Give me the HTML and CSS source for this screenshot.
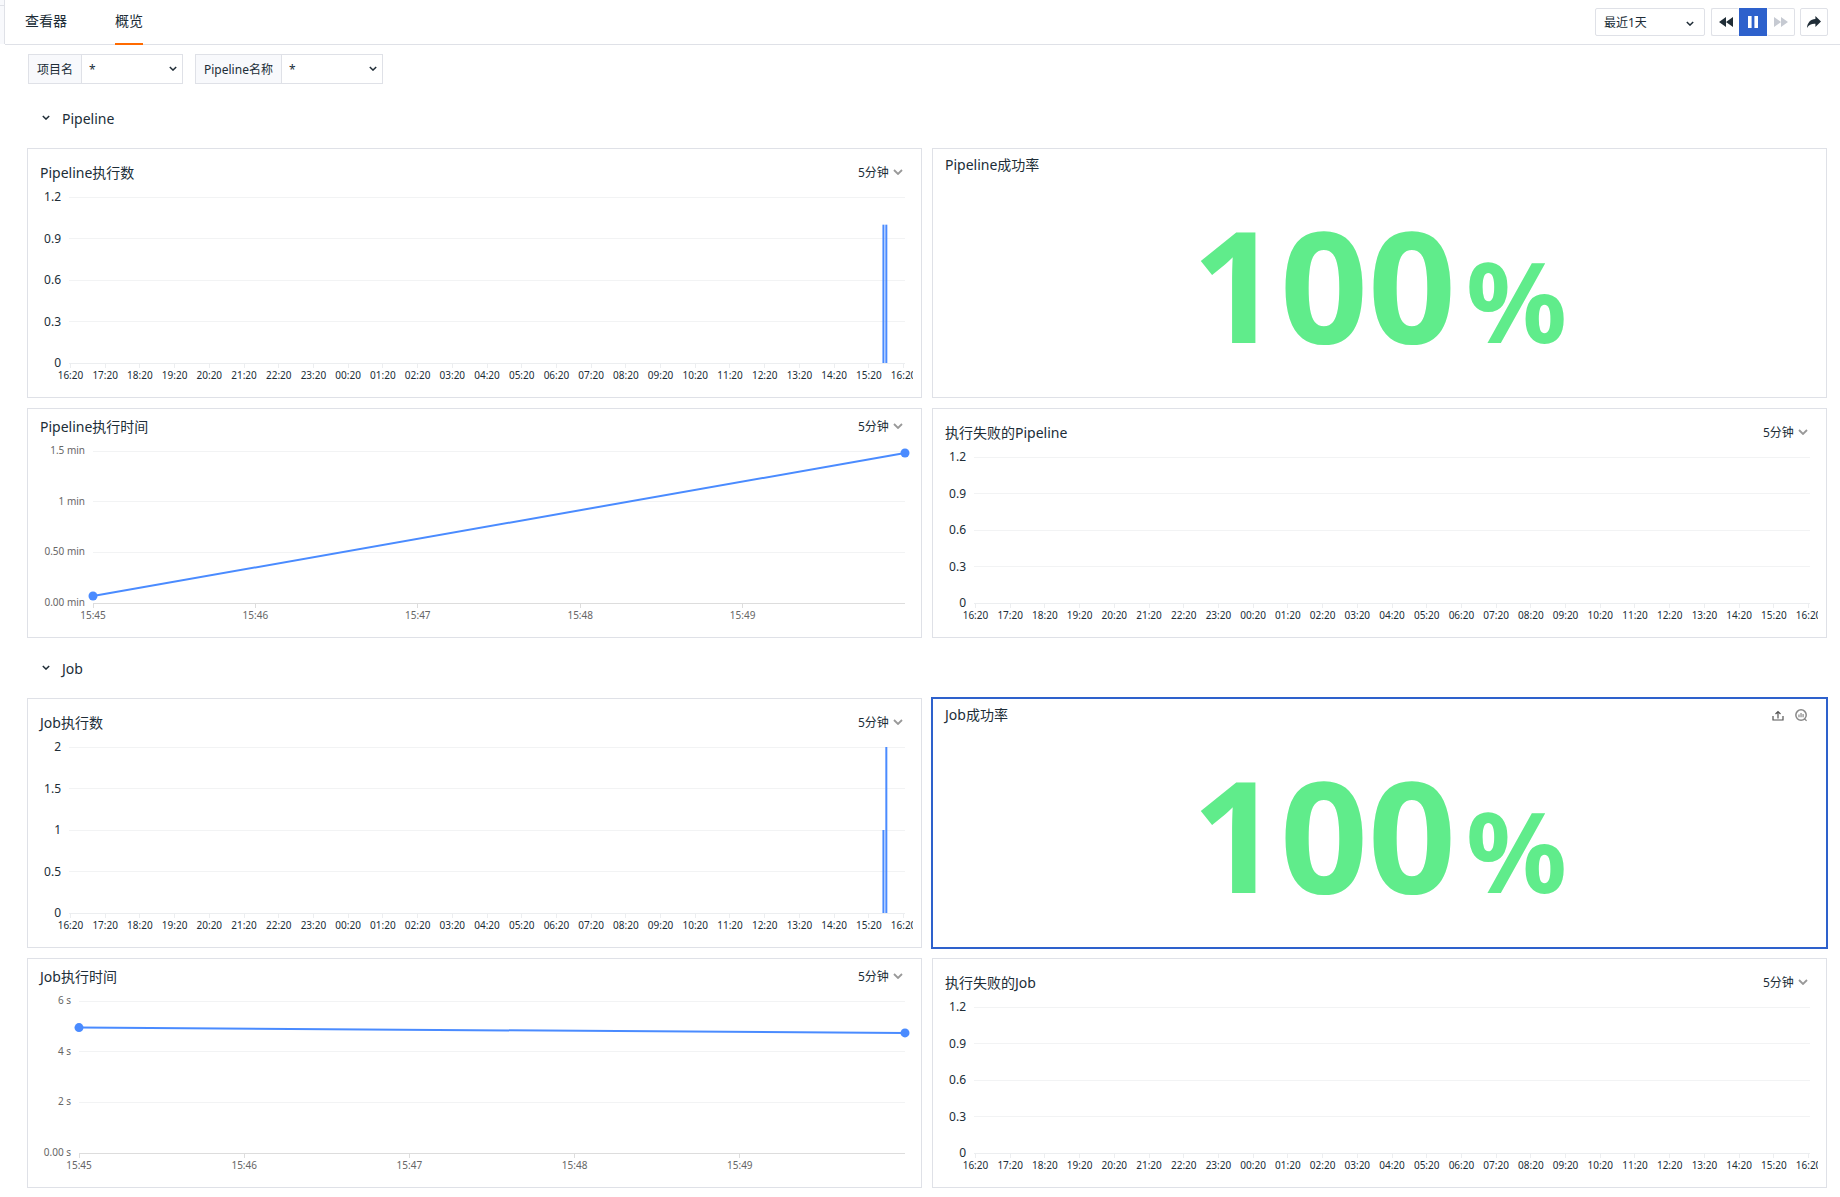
FILE: index.html
```html
<!DOCTYPE html>
<html lang="zh-CN">
<head>
<meta charset="utf-8">
<title>概览</title>
<link rel="stylesheet" href="styles.css">
</head>
<body>
<svg class="sprite" aria-hidden="true">
  <symbol id="chevron" viewBox="0 0 10 6"><path d="M1 1l4 4 4-4" fill="none" stroke="currentColor" stroke-width="1.8"/></symbol>
  <symbol id="rewind" viewBox="0 0 14 10"><path d="M7 0v10L0 5zM14 0v10L7 5z" fill="currentColor"/></symbol>
  <symbol id="forward" viewBox="0 0 14 10"><path d="M0 0v10l7-5zM7 0v10l7-5z" fill="currentColor"/></symbol>
  <symbol id="pause" viewBox="0 0 10 12"><path d="M0 0h3.6v12H0zM6.4 0H10v12H6.4z" fill="currentColor"/></symbol>
  <symbol id="share" viewBox="0 0 14 12"><path d="M8.4 0L14 5.6 8.4 11V7.800C4.600 7.600 1.800 8.800 0 12 .4 6.600 3.400 3.400 8.400 3z" fill="currentColor"/></symbol>
  <symbol id="upload" viewBox="0 0 12 12"><path d="M6 9.500V3M3.500 5L6 2.500 8.500 5M1 7v4h10V7" fill="none" stroke="currentColor" stroke-width="1.200"/></symbol>
  <symbol id="insight" viewBox="0 0 14 14"><circle cx="6.500" cy="6.500" r="5.600" fill="none" stroke="currentColor" stroke-width="1.600"/><path d="M4.300 6v3M6.500 4.300V9M8.700 5.500V9M10 10.500l2.500 2.200" fill="none" stroke="currentColor" stroke-width="1.300"/></symbol>
</svg>

<header class="topbar">
  <div class="edge"></div>
  <div class="bar">
    <nav class="tabs">
      <a class="tab" href="#viewer">查看器</a>
      <a class="tab tab-active" href="#overview" aria-current="page">概览</a>
    </nav>
    <div class="tools">
      <div class="picker range">
        <select aria-label="时间范围"><option>最近1天</option></select>
        <svg class="arrow"><use href="#chevron"/></svg>
      </div>
      <div class="playback">
        <button type="button" aria-label="后退"><svg class="skip"><use href="#rewind"/></svg></button>
        <button type="button" class="on" aria-label="暂停"><svg class="pause"><use href="#pause"/></svg></button>
        <button type="button" aria-label="前进" disabled><svg class="skip"><use href="#forward"/></svg></button>
      </div>
      <button type="button" aria-label="分享"><svg class="share"><use href="#share"/></svg></button>
    </div>
  </div>
</header>

<main>
  <form class="filters">
    <div class="filter">
      <label for="project">项目名</label>
      <div class="picker"><select id="project"><option>*</option></select><svg class="arrow"><use href="#chevron"/></svg></div>
    </div>
    <div class="filter">
      <label for="pipeline">Pipeline名称</label>
      <div class="picker"><select id="pipeline"><option>*</option></select><svg class="arrow"><use href="#chevron"/></svg></div>
    </div>
  </form>

  <section>
    <h2 class="group"><button type="button"><svg class="arrow"><use href="#chevron"/></svg>Pipeline</button></h2>
    <div class="cards">
      <article class="card">
        <div class="card-head"><h3>Pipeline执行数</h3><div class="picker step"><select aria-label="粒度"><option>5分钟</option></select><svg class="arrow"><use href="#chevron"/></svg></div></div>
        <div class="chart"><svg class="plot" data-chart="pipelineRuns"></svg></div>
      </article>
      <article class="card stat">
        <div class="card-head"><h3>Pipeline成功率</h3></div>
        <p class="value">100<span>%</span></p>
      </article>
      <article class="card line">
        <div class="card-head"><h3>Pipeline执行时间</h3><div class="picker step"><select aria-label="粒度"><option>5分钟</option></select><svg class="arrow"><use href="#chevron"/></svg></div></div>
        <div class="chart minutes"><svg class="plot" data-chart="pipelineTime"></svg></div>
      </article>
      <article class="card">
        <div class="card-head"><h3>执行失败的Pipeline</h3><div class="picker step"><select aria-label="粒度"><option>5分钟</option></select><svg class="arrow"><use href="#chevron"/></svg></div></div>
        <div class="chart"><svg class="plot" data-chart="failed"></svg></div>
      </article>
    </div>
  </section>

  <section>
    <h2 class="group"><button type="button"><svg class="arrow"><use href="#chevron"/></svg>Job</button></h2>
    <div class="cards">
      <article class="card">
        <div class="card-head"><h3>Job执行数</h3><div class="picker step"><select aria-label="粒度"><option>5分钟</option></select><svg class="arrow"><use href="#chevron"/></svg></div></div>
        <div class="chart"><svg class="plot" data-chart="jobRuns"></svg></div>
      </article>
      <article class="card stat selected">
        <div class="card-head"><h3>Job成功率</h3>
          <div class="actions">
            <button type="button" aria-label="导出"><svg class="upload"><use href="#upload"/></svg></button>
            <button type="button" aria-label="分析"><svg class="insight"><use href="#insight"/></svg></button>
          </div>
        </div>
        <p class="value">100<span>%</span></p>
      </article>
      <article class="card line">
        <div class="card-head"><h3>Job执行时间</h3><div class="picker step"><select aria-label="粒度"><option>5分钟</option></select><svg class="arrow"><use href="#chevron"/></svg></div></div>
        <div class="chart seconds"><svg class="plot" data-chart="jobTime"></svg></div>
      </article>
      <article class="card">
        <div class="card-head"><h3>执行失败的Job</h3><div class="picker step"><select aria-label="粒度"><option>5分钟</option></select><svg class="arrow"><use href="#chevron"/></svg></div></div>
        <div class="chart"><svg class="plot" data-chart="failed"></svg></div>
      </article>
    </div>
  </section>
</main>
<script src="charts.js"></script>
</body>
</html>
```
FILE: styles.css
```css
* { box-sizing: border-box; }
body {
  margin: 0;
  background: #fff;
  color: #202d37;
  font: 14px/22px "Noto Sans", "Noto Sans CJK SC", sans-serif;
}
h2, h3, p { margin: 0; font-size: 14px; font-weight: 400; }
button, select { font: inherit; color: inherit; border: 0; background: none; padding: 0; margin: 0; }
svg { display: block; }
.sprite { display: none; }

.topbar { display: flex; height: 45px; }
.edge { width: 5px; height: 44px; background: #f8f9fc; border-right: 1px solid #dfe1e7; }
.edge::before { content: ""; display: block; height: 5px; border-bottom: 1px solid #dfe1e7; }
.bar { flex: 1; display: flex; border-bottom: 1px solid #dfe1e7; }
.tabs { display: flex; gap: 48px; margin-bottom: -1px; padding-left: 20px; }
.tab { color: inherit; text-decoration: none; line-height: 41px; }
.tab-active { border-bottom: 2px solid #ff6a00; }
.tools { display: flex; gap: 5px; margin-left: auto; padding: 8px 12px 0 0; }
.tools button { display: grid; place-items: center; width: 28px; height: 28px; border: 1px solid #dfe1e7; border-radius: 2px; }
.playback { display: flex; }
.tools .on { border-color: #2e61cc; border-radius: 0; background: #2e61cc; color: #fff; }
.tools .playback button:first-child { border-right: 0; }
.tools .playback button:last-child { border-left: 0; }
.tools button:disabled { color: #c6cad2; }

.picker { display: grid; align-items: center; font-size: 12px; }
.picker select { grid-area: 1 / 1; width: 100%; height: 100%; appearance: none; }
.picker .arrow { grid-area: 1 / 1; justify-self: end; pointer-events: none; }
.arrow { width: 8px; height: 5px; }
.range { width: 110px; height: 28px; margin-right: 1px; border: 1px solid #dfe1e7; border-radius: 2px; }
.range select { padding: 2px 0 0 8px; }
.range .arrow { margin: 2px 10px 0 0; }
.skip { width: 14px; height: 10px; }
.pause { width: 10px; height: 12px; }
.share { width: 14px; height: 12px; }

main { padding: 9px 13px 9px 27px; }
.filters { display: flex; gap: 12px; padding-left: 1px; margin-bottom: 4px; }
.filter { display: flex; height: 30px; border: 1px solid #dfe1e7; font-size: 12px; }
.filter label { padding: 0 8px; background: #f8f9fc; border-right: 1px solid #dfe1e7; line-height: 30px; }
.filter .picker { width: 100px; }
.filter select { padding: 2px 0 0 7px; }
.filter .arrow { margin: 0 5px 2px 0; }

.group button { display: flex; align-items: center; gap: 12px; height: 60px; padding: 2px 0 0 15px; }
.group .arrow { margin-bottom: 3px; }
.cards { display: grid; grid-template-columns: 1fr 1fr; grid-template-rows: 250px 230px; gap: 10px; }
.card { display: flex; flex-direction: column; min-width: 0; border: 1px solid #dfe1e7; }
.card-head { display: flex; justify-content: space-between; padding: 13px 18px 0 12px; }
.line .card-head { padding-top: 7px; }
.stat .card-head { padding-top: 5px; }
.step { width: 45px; height: 22px; }
.step .arrow { width: 10px; height: 6px; margin-bottom: 2px; color: #999; }
.selected { border-color: #2e61cc; box-shadow: 0 0 0 1px #2e61cc; }
.actions { display: flex; align-items: center; gap: 11px; color: #555; }
.upload { width: 12px; height: 12px; }
.insight { width: 13px; height: 13px; color: #888; }

.value { margin: auto; padding-top: 10px; color: #60ec8b; font-size: 154px; font-weight: 700; line-height: 180px; }
.value span { margin-left: 10px; font-size: 112px; }

.chart { flex: 1; display: flex; min-height: 0; margin-right: 8px; padding: 13px 8px 34px 41px; overflow: hidden; }
.minutes { padding-left: 65px; }
.seconds { padding-left: 51px; }
.plot { flex: 1; min-width: 0; height: 100%; overflow: visible; font-size: 12px; }
.plot text { fill: #202d37; }
.plot .x { font-size: 10px; text-anchor: middle; }
.plot .y { text-anchor: end; }
.line .plot text { fill: #666; font-size: 10px; }
.plot .grid { stroke: #f2f3f4; shape-rendering: crispEdges; }
.plot .axis { stroke: #eceef0; shape-rendering: crispEdges; }
.line .plot .axis { stroke: #ddd; }
.plot .bar { fill: #4a8bff; }
.plot .series { stroke: #4a8bff; stroke-width: 2; }
.plot .dot { fill: #4a8bff; }
```
FILE: charts.js
```js
const SLOTS = 289;
const hours = Array.from({ length: 25 }, (_, i) => ({
  at: (i * 12 + 0.5) / SLOTS,
  text: String((16 + i) % 24).padStart(2, "0") + ":20",
}));
const minutes = [45, 46, 47, 48, 49].map((m, i) => ({ at: i / 5, text: "15:" + m }));

const charts = {
  pipelineRuns: { y: ["1.2", "0.9", "0.6", "0.3", "0"], x: hours, bars: [[281, 1 / 1.2], [282, 1 / 1.2]] },
  jobRuns: { y: ["2", "1.5", "1", "0.5", "0"], x: hours, bars: [[281, 0.5], [282, 1]] },
  failed: { y: ["1.2", "0.9", "0.6", "0.3", "0"], x: hours },
  pipelineTime: { y: ["1.5 min", "1 min", "0.50 min", "0.00 min"], x: minutes, ends: [0.046, 0.987] },
  jobTime: { y: ["6 s", "4 s", "2 s", "0.00 s"], x: minutes, ends: [0.825, 0.79] },
};

function add(parent, name, attrs, text) {
  const node = document.createElementNS("http://www.w3.org/2000/svg", name);
  for (const key in attrs) node.setAttribute(key, attrs[key]);
  if (text) node.textContent = text;
  parent.append(node);
  return node;
}
const pct = (v) => v * 100 + "%";

for (const svg of document.querySelectorAll("[data-chart]")) {
  const { y, x, bars = [], ends } = charts[svg.dataset.chart];
  y.forEach((text, i) => {
    const at = pct(i / (y.length - 1));
    const last = i === y.length - 1;
    add(svg, "line", { class: last ? "axis" : "grid", x1: 0, x2: "100%", y1: at, y2: at });
    add(svg, "text", { class: "y", x: -8, y: at, dy: ends ? 3 : 4 }, text);
  });
  // Ticks and time labels hang below the plot's bottom edge.
  for (const { at, text } of x) {
    const axis = add(svg, "svg", { x: pct(at), y: "100%", width: 1, height: 1, overflow: "visible" });
    add(axis, "line", { class: "axis", y2: 5 });
    add(axis, "text", { class: "x", y: 16 }, text);
  }
  for (const [slot, height] of bars) {
    add(svg, "rect", { class: "bar", x: pct((slot + 0.2) / SLOTS), y: pct(1 - height), width: 2, height: pct(height) });
  }
  if (ends) {
    add(svg, "line", { class: "series", x1: 0, y1: pct(1 - ends[0]), x2: "100%", y2: pct(1 - ends[1]) });
    add(svg, "circle", { class: "dot", cx: 0, cy: pct(1 - ends[0]), r: 4.5 });
    add(svg, "circle", { class: "dot", cx: "100%", cy: pct(1 - ends[1]), r: 4.5 });
  }
}
```
